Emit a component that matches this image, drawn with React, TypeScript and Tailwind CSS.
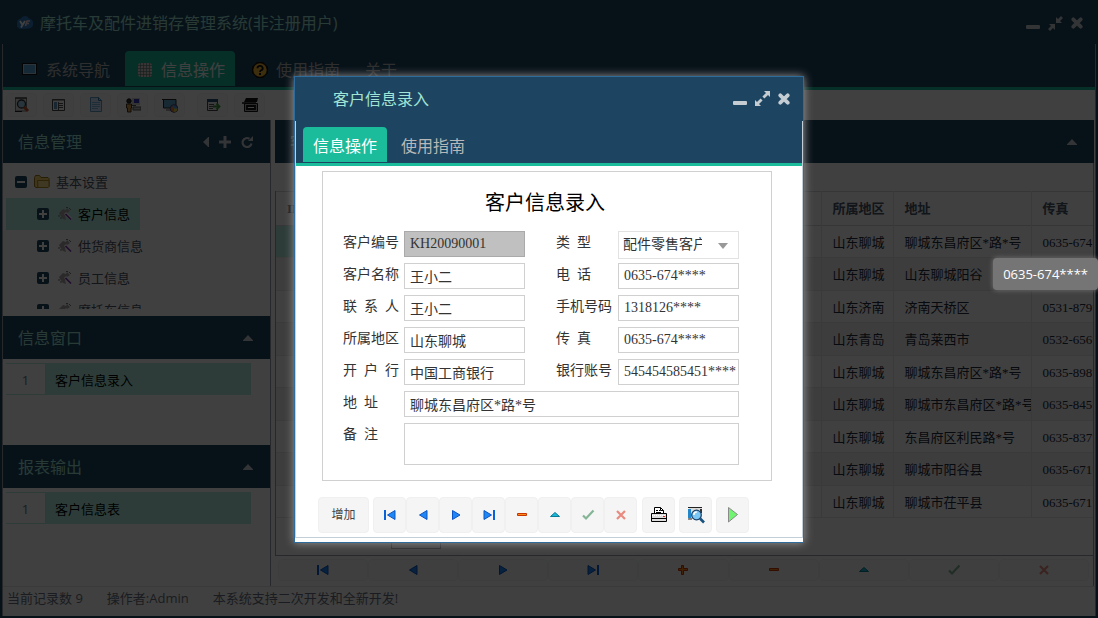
import type { ReactNode } from "react";

// ─── Types & data ─────────────────────────────────────────────────────────────

interface CustomerRow {
  region: string;
  address: string;
  fax: string;
}

const CUSTOMERS: CustomerRow[] = [
  { region: "山东聊城", address: "聊城东昌府区*路*号", fax: "0635-674****" },
  { region: "山东聊城", address: "山东聊城阳谷", fax: "0635-674****" },
  { region: "山东济南", address: "济南天桥区", fax: "0531-879****" },
  { region: "山东青岛", address: "青岛莱西市", fax: "0532-656****" },
  { region: "山东聊城", address: "聊城东昌府区*路*号", fax: "0635-898****" },
  { region: "山东聊城", address: "聊城市东昌府区*路*号", fax: "0635-845****" },
  { region: "山东聊城", address: "东昌府区利民路*号", fax: "0635-837****" },
  { region: "山东聊城", address: "聊城市阳谷县", fax: "0635-671****" },
  { region: "山东聊城", address: "聊城市茌平县", fax: "0635-671****" },
];

const TREE = ["客户信息", "供货商信息", "员工信息", "摩托车信息"];

// ─── Window icons ─────────────────────────────────────────────────────────────

function MinimizeIcon() {
  return (
    <svg width="14" height="14" viewBox="0 0 14 14" fill="currentColor">
      <rect y="9" width="14" height="4" rx="1" />
    </svg>
  );
}

function ExpandIcon() {
  return (
    <svg width="15" height="15" viewBox="0 0 15 15" fill="currentColor">
      <path d="M9 0h6v6l-2-2-3.6 3.6-2-2L11 2zM6 15H0V9l2 2 3.6-3.6 2 2L4 13z" />
    </svg>
  );
}

function CompressIcon() {
  return (
    <svg width="15" height="15" viewBox="0 0 15 15" fill="currentColor">
      <path d="M8 7V1l2 2 3-3 2 2-3 3 2 2zM7 8v6l-2-2-3 3-2-2 3-3-2-2z" />
    </svg>
  );
}

function CloseIcon() {
  return (
    <svg width="12" height="12" viewBox="0 0 12 12" stroke="currentColor" strokeWidth="3.8" strokeLinecap="round">
      <path d="M2.3 2.3l7.4 7.4M9.7 2.3l-7.4 7.4" />
    </svg>
  );
}

function CaretUp() {
  return (
    <svg width="10" height="6" viewBox="0 0 10 6" fill="currentColor">
      <path d="M5 0l5 5.2V6H0v-.8z" />
    </svg>
  );
}

function CaretLeft() {
  return (
    <svg width="6" height="10" viewBox="0 0 6 10" fill="currentColor">
      <path d="M0 5l5.2-5H6v10h-.8z" />
    </svg>
  );
}

function PlusIcon() {
  return (
    <svg width="12" height="12" viewBox="0 0 12 12" fill="currentColor">
      <path d="M4.5 0h3v4.5H12v3H7.5V12h-3V7.5H0v-3h4.5z" />
    </svg>
  );
}

function ReloadIcon() {
  return (
    <svg width="12" height="12" viewBox="0 0 12 12">
      <path d="M8.5 2.7A4.5 4.5 0 1 0 10.5 7.5" fill="none" stroke="currentColor" strokeWidth="2.2" />
      <path d="M12 0v5H7z" fill="currentColor" />
    </svg>
  );
}

function LogoIcon() {
  return (
    <svg width="16" height="16" viewBox="0 0 16 16">
      <path d="M4 14a4.500 4.500 0 0 1-4-6.500 4.500 4.500 0 0 1 4-4 4.500 4.500 0 0 1 8 0 4.500 4.500 0 0 1 4 5 4.500 4.500 0 0 1-4 5z" fill="#2f7cc4" />
      <path d="M3 6l2.500 4L8 6M5.500 10L4 12.500" fill="none" stroke="#fff" strokeWidth="1.8" />
      <path d="M13 6h-3l-1.500 5M9.500 8.500H12" fill="none" stroke="#f3d3d3" strokeWidth="1.6" />
    </svg>
  );
}

// ─── Tab icons ────────────────────────────────────────────────────────────────

function ScreenIcon() {
  return (
    <svg width="16" height="16" viewBox="0 0 16 16">
      <rect x=".5" y="1.5" width="14" height="11" fill="#4e9bd0" stroke="#111" />
      <rect x="1.5" y="2.500" width="12" height="9" fill="#5aa5da" stroke="#b4d2e6" />
    </svg>
  );
}

function GridIcon() {
  return (
    <svg width="16" height="16" viewBox="0 0 16 16">
      <rect x="1" y="1" width="14" height="14" rx="3" fill="#e8cfcd" />
      <path d="M3.5 1v14M6.5 1v14M9.5 1v14M12.5 1v14M1 3.5h14M1 6.5h14M1 9.5h14M1 12.5h14" stroke="#57827a" strokeWidth=".7" />
    </svg>
  );
}

function HelpIcon() {
  return (
    <svg width="16" height="16" viewBox="0 0 16 16">
      <path d="M5 0h6l5 5v6l-5 5H5l-5-5V5z" fill="#1a1206" />
      <circle cx="8" cy="8" r="6.7" fill="#f2b63a" />
      <path d="M5.5 6.3a2.6 2.3 0 1 1 4 1.8Q8 9 8 10" fill="none" stroke="#111" strokeWidth="1.8" />
      <rect x="7" y="11" width="2" height="2" fill="#111" />
    </svg>
  );
}

// ─── Toolbar icons ────────────────────────────────────────────────────────────

const TOOL_ICONS: { name: string; art: ReactNode }[] = [
  {
    name: "查询",
    art: (
      <>
        <path d="M1.5 1h11v13h-11z" fill="#ddd" stroke="#777" />
        <path d="M1 1h12M1 14.5h7" stroke="#222" />
        <circle cx="7.5" cy="7" r="4" fill="#9ed4ee" stroke="#333" strokeWidth="1.3" />
        <path d="M10 10l4 4" stroke="#c4502c" strokeWidth="3" />
      </>
    ),
  },
  {
    name: "列表",
    art: (
      <>
        <path d="M1.5 2.5h12v11h-12z" fill="#fff" stroke="#444" />
        <rect x="3" y="5" width="3" height="7" fill="#5f9cc4" />
        <path d="M1 3h13M8 6.5h4M8 8.5h4M8 10.5h4M7.5 5v8" stroke="#555" />
      </>
    ),
  },
  {
    name: "文档",
    art: (
      <>
        <path d="M2.5.5h8l3 3v11h-11z" fill="#cfe8fa" stroke="#5d9fca" />
        <path d="M10.5.5v3h3" fill="none" stroke="#2c77a8" />
        <path d="M4 5.5h8M4 7.5h8M4 9.5h8M4 11.5h6" stroke="#79b4da" />
      </>
    ),
  },
  {
    name: "员工",
    art: (
      <>
        <path d="M7 1h8v7H7z" fill="#ccc" />
        <path d="M9 2h5v4H9z" fill="#3437c0" />
        <path d="M7 8.5h4M8 10h8v3H8z" fill="#bbb" stroke="#555" />
        <circle cx="4" cy="4" r="2.2" fill="#333" stroke="#111" />
        <path d="M1.5 7h5v4H6v4H2.5v-4h-1z" fill="#d39a45" stroke="#432" />
      </>
    ),
  },
  {
    name: "显示",
    art: (
      <>
        <path d="M0 2.5h14v8.500H1.500V3" fill="#5ea6cc" stroke="#222" />
        <path d="M4 13h5" stroke="#555" />
        <circle cx="12" cy="11.5" r="3.8" fill="#4f9ad8" stroke="#503d65" />
        <path d="M12 8v7a3.5 3.5 0 0 1-3-3.5z" fill="#e77d43" />
        <path d="M12 11.5h3.5A3.5 3.5 0 0 1 12 15z" fill="#e2cf3d" />
      </>
    ),
  },
  {
    name: "导出",
    art: (
      <>
        <path d="M2.5 2.500h10v11h-10z" fill="#eee" stroke="#444" />
        <path d="M2 2h11v3H2z" fill="#24506f" />
        <path d="M4 7.5h5M4 9.5h5M4 11.5h4" stroke="#555" />
        <path d="M8 9.500h6M11.500 6.500l3 3-3 3" fill="none" stroke="#3d963d" strokeWidth="1.8" />
      </>
    ),
  },
  {
    name: "打印",
    art: (
      <>
        <path d="M4 1h12l-1 4H2z" fill="#111" />
        <path d="M2.5 6.5h13v8h-13z" fill="#aaa" stroke="#111" />
        <path d="M0 6h14" stroke="#111" strokeWidth="1.5" />
        <path d="M5 9h8v3H5z" fill="#fff" stroke="#111" strokeWidth="1.8" />
      </>
    ),
  },
];

// ─── Record navigation icons ──────────────────────────────────────────────────

function Glyph({ children }: { children: ReactNode }) {
  return (
    <svg width="16" height="16" viewBox="0 0 16 16">
      {children}
    </svg>
  );
}

const FirstIcon = () => (
  <Glyph>
    <path d="M3 3v10" stroke="#0a62d8" strokeWidth="2" />
    <path d="M13 3.5v9L5.5 8z" fill="#1f86f5" stroke="#0a55c4" />
  </Glyph>
);
const PrevIcon = () => (
  <Glyph>
    <path d="M12 3.5v9L4.5 8z" fill="#1f86f5" stroke="#0a55c4" />
  </Glyph>
);
const NextIcon = () => (
  <Glyph>
    <path d="M4.5 3.5v9L12 8z" fill="#1f86f5" stroke="#0a55c4" />
  </Glyph>
);
const LastIcon = () => (
  <Glyph>
    <path d="M3 3.5v9L10.500 8z" fill="#1f86f5" stroke="#0a55c4" />
    <path d="M13 3v10" stroke="#0a62d8" strokeWidth="2" />
  </Glyph>
);
const InsertIcon = () => (
  <Glyph>
    <path d="M6.5 3.5h2v3h4v2h-4v4h-2v-4h-3v-2h3z" fill="#ff8a1c" stroke="#c63400" />
  </Glyph>
);
const RemoveIcon = () => (
  <Glyph>
    <path d="M3.5 6.5h9v2h-9z" fill="#ff8a1c" stroke="#c63400" />
  </Glyph>
);
const EditIcon = () => (
  <Glyph>
    <path d="M3.5 9.5L8 5.5l4.5 4z" fill="#18b6d8" stroke="#087c94" />
  </Glyph>
);
const PostIcon = () => (
  <Glyph>
    <path d="M3 8.5l3 3 7.500-8" fill="none" stroke="#84b596" strokeWidth="2.2" />
  </Glyph>
);
const CancelIcon = () => (
  <Glyph>
    <path d="M4 4l8 8M12 4l-8 8" fill="none" stroke="#e88a80" strokeWidth="2.2" />
  </Glyph>
);
const PrintIcon = () => (
  <svg width="18" height="18" viewBox="0 0 18 18">
    <path d="M4.5 8V1.500h6l3 3V8" fill="#fff" stroke="#000" />
    <path d="M6 4.5h2M9 4.5h1M6 6.5h5M10.5 1.5v3h3" stroke="#000" fill="none" />
    <path d="M1.5 7.5h15v8h-15z" fill="#ddd" stroke="#000" />
    <path d="M2 9.5h14" stroke="#fff" strokeDasharray="1 1" />
    <path d="M1 12.5h16" stroke="#000" />
    <path d="M13 10.5h2" stroke="#d22" />
  </svg>
);
const PreviewIcon = () => (
  <svg width="18" height="18" viewBox="0 0 18 18">
    <path d="M2 2h13v11H2z" fill="#d9d9d9" />
    <path d="M1 1.500h14M1 13h4" stroke="#222" />
    <path d="M1 3h3v9H1z" fill="#2286c8" />
    <path d="M14 3v4" stroke="#333" strokeWidth="2" />
    <circle cx="9.500" cy="9" r="4.800" fill="#7cc8f5" stroke="#1b3e66" strokeWidth="1.200" />
    <path d="M6.800 9a3 3 0 0 1 3-3" stroke="#fff" strokeWidth="1.600" fill="none" />
    <path d="M13 12.500l4 4" stroke="#17517e" strokeWidth="2.600" />
  </svg>
);
const RunIcon = () => (
  <svg width="18" height="18" viewBox="0 0 18 18">
    <path d="M4.500 1.500L13.500 8.500l-9 7.500z" fill="#71f571" stroke="#8a8a8a" />
  </svg>
);

const GRID_NAV = [
  { name: "首条", Icon: FirstIcon },
  { name: "上一条", Icon: PrevIcon },
  { name: "下一条", Icon: NextIcon },
  { name: "末条", Icon: LastIcon },
  { name: "插入", Icon: InsertIcon },
  { name: "删除", Icon: RemoveIcon },
  { name: "编辑", Icon: EditIcon },
  { name: "保存", Icon: PostIcon },
  { name: "取消", Icon: CancelIcon },
];

const FORM_NAV = GRID_NAV.filter((item) => item.name !== "插入");

const FORM_TOOLS = [
  { name: "打印", Icon: PrintIcon },
  { name: "预览", Icon: PreviewIcon },
  { name: "运行", Icon: RunIcon },
];

// ─── Side panels ──────────────────────────────────────────────────────────────

function PanelHeader({ title, children }: { title: string; children: ReactNode }) {
  return (
    <div className="flex h-[43px] shrink-0 items-center justify-between bg-[#1d4461] pl-[15px] pr-[17px] pt-px text-[#a0e5d5]">
      <h2 className="text-base">{title}</h2>
      <div className="flex items-center gap-[10px] text-[#c5cdd3]">{children}</div>
    </div>
  );
}

function ToggleBox({ open }: { open: boolean }) {
  return (
    <svg width="12" height="12" viewBox="0 0 12 12">
      <rect width="12" height="12" rx="2" fill="#1d4461" />
      <path d={open ? "M2 6h8" : "M2 6h8M6 2v8"} stroke="#fff" strokeWidth="2" />
    </svg>
  );
}

function FolderIcon() {
  return (
    <svg width="16" height="16" viewBox="0 0 16 16">
      <path d="M.5 12.5v-9l1-2h4l1.500 2h7l1 1v8l-1 1h-12z" fill="#f5d468" stroke="#a07a1c" />
      <path d="M3.5 6.5h11.500v6l-1 1H4z" fill="#fbe08a" stroke="#b48a22" />
    </svg>
  );
}

function ToolLeafIcon() {
  return (
    <svg width="16" height="16" viewBox="0 0 16 16">
      <path d="M2 7l4-4 3 1 1-2 3 3-3 2-2 3 1 4-3-1-3-4z" fill="#aaa5a5" />
      <path d="M2 9v2M4 11v2M12 2l2 2M9 1.500h2" stroke="#777" />
      <path d="M8 7l6 6" stroke="#fff" strokeWidth="3" />
      <path d="M8.500 8l5.500 5.500" stroke="#7a2ea8" strokeWidth="1.600" />
    </svg>
  );
}

function WindowList({ label }: { label: string }) {
  return (
    <div className="ml-[3px] mr-[19px] mt-1 flex h-8 items-center text-[13px]">
      <span className="flex h-full w-[39px] items-center justify-center border-y border-[#b2f0e2] pt-1 text-gray-500">
        1
      </span>
      <a href="#window" className="flex h-full flex-1 items-center bg-[#b2f0e2] pl-[10px] pt-1 text-black">
        {label}
      </a>
    </div>
  );
}

function Sidebar() {
  return (
    <aside className="flex w-[268px] shrink-0 flex-col border-r border-gray-400">
      <PanelHeader title="信息管理">
        <CaretLeft />
        <PlusIcon />
        <ReloadIcon />
      </PanelHeader>
      <div className="h-[153px] pb-[7px] pl-[3px] pt-[3px] text-[13px] text-gray-600">
        <ul className="h-full overflow-hidden">
          <li className="flex h-8 items-center pl-[9px]">
            <ToggleBox open />
            <span className="ml-[7px] mr-1.5">
              <FolderIcon />
            </span>
            <span className="pt-0.5">基本设置</span>
          </li>
          {TREE.map((label, i) => (
            <li
              key={label}
              className={`flex h-8 w-fit items-center pl-[31px] pr-[10px] ${i === 0 ? "bg-[#b2f0e2] text-black" : ""}`}
            >
              <ToggleBox open={false} />
              <span className="ml-2 mr-[5px]">
                <ToolLeafIcon />
              </span>
              <span className="pt-0.5">{label}</span>
            </li>
          ))}
        </ul>
      </div>
      <PanelHeader title="信息窗口">
        <CaretUp />
      </PanelHeader>
      <div className="h-[86px]">
        <WindowList label="客户信息录入" />
      </div>
      <PanelHeader title="报表输出">
        <CaretUp />
      </PanelHeader>
      <div className="flex-1">
        <WindowList label="客户信息表" />
      </div>
    </aside>
  );
}

// ─── Customer grid ────────────────────────────────────────────────────────────

const cell = "overflow-hidden whitespace-nowrap border-l border-gray-200 pl-[11px] pt-0.5";

function CustomerGrid() {
  return (
    <section className="flex min-w-0 flex-1 flex-col">
      <PanelHeader title="客户信息">
        <CaretUp />
      </PanelHeader>
      <div className="flex flex-1 flex-col border-r border-gray-400 pt-7">
        <div className="flex flex-1 flex-col border-b border-l border-gray-400 font-['Liberation_Serif','Noto_Sans_CJK_SC',serif] text-[13px]">
          <table className="w-full table-fixed text-left text-gray-800">
            <thead>
              <tr className="h-[34px] border-y border-gray-300 text-gray-600">
                <th className="w-24 pl-[11px]">ID</th>
                <th />
                <th className="w-[72px] border-l border-gray-200 pl-[11px]">所属地区</th>
                <th className="w-[138px] border-l border-gray-200 pl-[11px]">地址</th>
                <th className="w-[62px] border-l border-gray-200 pl-[11px]">传真</th>
              </tr>
            </thead>
            <tbody>
              {CUSTOMERS.map((row, i) => (
                <tr key={i} className="border-b border-gray-200 odd:h-8 even:h-[33px] even:bg-gray-100">
                  <td className={i === 0 ? "bg-[#b2f0e2]" : ""} />
                  <td />
                  <td className={cell}>{row.region}</td>
                  <td className={cell}>{row.address}</td>
                  <td className={cell}>{row.fax}</td>
                </tr>
              ))}
            </tbody>
          </table>
          <div className="flex flex-1 items-center gap-2 pl-[94px] text-gray-500">
            <label htmlFor="page">第</label>
            <input id="page" defaultValue="1" className="h-6 w-[50px] border border-gray-400 px-1" />
            <span>页,共1页</span>
          </div>
        </div>
        <div className="grid h-[30px] grid-cols-9 pb-[5px] pl-[3px] pr-1 pt-[3px]">
          {GRID_NAV.map(({ name, Icon }) => (
            <button
              key={name}
              aria-label={name}
              className="flex items-center justify-center rounded border border-gray-100 bg-gray-50"
            >
              <Icon />
            </button>
          ))}
        </div>
      </div>
    </section>
  );
}

// ─── Main window ──────────────────────────────────────────────────────────────

function MainTab({ label, icon, active }: { label: string; icon?: ReactNode; active?: boolean }) {
  return (
    <button
      className={`flex h-[35px] items-center rounded-t px-[10px] pt-0.5 text-base ${active ? "bg-[#1abc9c] text-white" : "text-[#b8b8b8]"}`}
    >
      {icon && <span className="w-[26px] pl-0.5">{icon}</span>}
      {label}
    </button>
  );
}

function MainWindow() {
  return (
    <div className="flex min-h-screen flex-col border-2 border-[#1d4461] bg-white">
      <header className="flex h-[42px] items-center justify-between bg-[#1d4461] pl-[15px] pr-[13px] text-[#a0e5d5]">
        <h1 className="flex items-center gap-[7px] text-base">
          <LogoIcon />
          摩托车及配件进销存管理系统(非注册用户)
        </h1>
        <div className="flex items-center gap-2 text-[#c5cdd3]">
          <button aria-label="最小化"><MinimizeIcon /></button>
          <button aria-label="还原"><CompressIcon /></button>
          <button aria-label="关闭"><CloseIcon /></button>
        </div>
      </header>
      <div className="flex flex-1 flex-col border-x border-gray-400">
        <nav className="flex h-[46px] items-end gap-[5px] border-b-[3px] border-[#1abc9c] bg-[#1d4461] pl-[7px] pb-px">
          <MainTab label="系统导航" icon={<ScreenIcon />} />
          <MainTab label="信息操作" icon={<GridIcon />} active />
          <MainTab label="使用指南" icon={<HelpIcon />} />
          <MainTab label="关于" />
        </nav>
        <div className="flex h-[30px] items-center gap-[6px] pl-[3px]">
          {TOOL_ICONS.map(({ name, art }) => (
            <button
              key={name}
              aria-label={name}
              className="flex h-6 w-[31px] items-center justify-center rounded border border-gray-100 bg-gray-50 nth-[6]:ml-1.5"
            >
              <Glyph>{art}</Glyph>
            </button>
          ))}
        </div>
        <main className="flex flex-1 gap-1 pr-px">
          <Sidebar />
          <CustomerGrid />
        </main>
        <footer className="flex h-[30px] items-center gap-6 border-t border-gray-200 pb-1.5 pl-1 text-[13px] text-gray-500">
          <span>当前记录数 9</span>
          <span>操作者:Admin</span>
          <span>本系统支持二次开发和全新开发!</span>
        </footer>
      </div>
    </div>
  );
}

// ─── Customer form dialog ─────────────────────────────────────────────────────

interface FieldProps {
  id: string;
  label: string;
  value: string;
  second?: boolean;
  readOnly?: boolean;
  wide?: boolean;
}

function FieldLabel({ id, label, second }: { id: string; label: string; second?: boolean }) {
  return (
    <label htmlFor={id} className={`whitespace-pre leading-6 ${second ? "pl-[31px]" : ""}`}>
      {label}
    </label>
  );
}

function Field({ id, label, value, second, readOnly, wide }: FieldProps) {
  return (
    <>
      <FieldLabel id={id} label={label} second={second} />
      <input
        id={id}
        defaultValue={value}
        readOnly={readOnly}
        className={`h-[26px] w-full border pl-[5px] outline-none ${wide ? "col-span-3" : ""} ${readOnly ? "border-[#aaa] bg-[#c0c0c0]" : "border-[#d0d0d0] bg-white"}`}
      />
    </>
  );
}

function CustomerForm() {
  return (
    <form className="ml-[26px] mr-[30px] mt-[5px] border border-[#d0d0d0] px-5 pb-[15px] font-['Liberation_Serif','Noto_Sans_CJK_SC',serif] text-sm text-[#333]">
      <h3 className="h-[59px] pr-1 pt-1 text-center text-xl leading-[54px] text-black">客户信息录入</h3>
      <div className="grid grid-cols-[61px_1fr_93px_1fr] items-start gap-y-[6px] pr-3">
        <Field id="code" label="客户编号" value="KH20090001" readOnly />
        <FieldLabel id="kind" label="类  型" second />
        <div className="relative h-[26px]">
          <select
            id="kind"
            className="h-7 w-full appearance-none border border-[#e2e2e2] bg-white pl-1 pr-9 outline-none"
          >
            <option>配件零售客户</option>
          </select>
          <svg width="10" height="6" viewBox="0 0 10 6" className="pointer-events-none absolute right-[11px] top-3">
            <path d="M0 0h10L5 6z" fill="#999" />
          </svg>
        </div>
        <Field id="name" label="客户名称" value="王小二" />
        <Field id="phone" label="电  话" value="0635-674****" second />
        <Field id="contact" label="联  系  人" value="王小二" />
        <Field id="mobile" label="手机号码" value="1318126****" second />
        <Field id="region" label="所属地区" value="山东聊城" />
        <Field id="fax" label="传  真" value="0635-674****" second />
        <Field id="bank" label="开  户  行" value="中国工商银行" />
        <Field id="account" label="银行账号" value="545454585451****" second />
        <Field id="address" label="地  址" value="聊城东昌府区*路*号" wide />
        <FieldLabel id="remark" label="备  注" />
        <textarea
          id="remark"
          className="col-span-3 block h-[42px] w-full resize-none border border-[#d0d0d0] outline-none"
        />
      </div>
    </form>
  );
}

const formButton = "flex h-9 items-center justify-center rounded border border-[#f0f0f0] bg-[#f5f5f5]";

function CustomerDialog() {
  return (
    <div
      role="dialog"
      aria-label="客户信息录入"
      className="w-[510px] border border-[#2f6c9c] bg-white pb-1 shadow-[0_0_9px_#999]"
    >
      <div className="flex h-11 items-center justify-between bg-[#1d4461] pl-[38px] pr-[13px]">
        <h2 className="text-base text-[#a0e5d5]">客户信息录入</h2>
        <div className="flex items-center gap-2 text-[#c5cdd3]">
          <button aria-label="最小化"><MinimizeIcon /></button>
          <button aria-label="最大化"><ExpandIcon /></button>
          <button aria-label="关闭"><CloseIcon /></button>
        </div>
      </div>
      <div className="border-x border-b border-[#c3ced6]">
        <div className="flex h-[45px] items-end gap-1 border-b-[3px] border-[#1abc9c] bg-[#1d4461] pb-px pl-[7px] text-base">
          <button className="h-[35px] rounded-t bg-[#1abc9c] px-[10px] pt-1 text-white">信息操作</button>
          <button className="h-[35px] px-[10px] pt-1 text-[#b8b8b8]">使用指南</button>
        </div>
        <CustomerForm />
        <div className="mt-4 flex pb-1 pl-[22px]">
          <button className={`${formButton} mr-1 w-[51px] text-xs text-[#444]`}>增加</button>
          {FORM_NAV.map(({ name, Icon }) => (
            <button key={name} aria-label={name} className={`${formButton} w-[33px]`}>
              <Icon />
            </button>
          ))}
          <div className="ml-[5px] flex gap-1">
            {FORM_TOOLS.map(({ name, Icon }) => (
              <button key={name} aria-label={name} className={`${formButton} w-[33px]`}>
                <Icon />
              </button>
            ))}
          </div>
        </div>
      </div>
    </div>
  );
}

// ─── App ──────────────────────────────────────────────────────────────────────

export default function App() {
  return (
    <div className="relative font-['Open_Sans','Noto_Sans_CJK_SC',sans-serif]">
      <MainWindow />
      <div className="absolute inset-0 flex items-center justify-center bg-black/75">
        <CustomerDialog />
      </div>
      <div
        role="tooltip"
        className="absolute right-0 top-[258px] rounded-sm bg-[#757575] px-[10px] py-1.5 text-[13px] leading-5 text-white shadow-[0_0_5px_#777]"
      >
        0635-674****
      </div>
    </div>
  );
}
